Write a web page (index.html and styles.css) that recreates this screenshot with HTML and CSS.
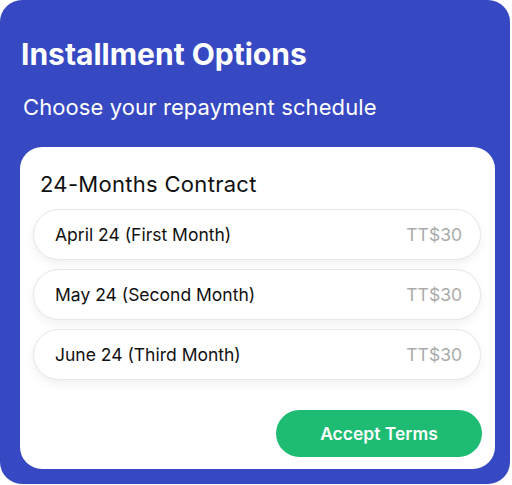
FILE: index.html
```html
<!DOCTYPE html>
<html>
  <head>
    <meta charset="utf-8" />
    <title>Installment Options</title>
    <link rel="stylesheet" href="styles.css">
  </head>
  <body>
    <div class="panel">
      <h1 class="panel-title">Installment Options</h1>
      <p class="panel-subtitle">Choose your repayment schedule</p>

      <div class="contract-card">
        <div class="contract-title">24-Months Contract</div>

        <div class="schedule-list">
          <div class="schedule-row">
            <span class="schedule-month">April 24 (First Month)</span>
            <span class="schedule-amount">TT$30</span>
          </div>
          <div class="schedule-row">
            <span class="schedule-month">May 24 (Second Month)</span>
            <span class="schedule-amount">TT$30</span>
          </div>
          <div class="schedule-row">
            <span class="schedule-month">June 24 (Third Month)</span>
            <span class="schedule-amount">TT$30</span>
          </div>
        </div>

        <div class="card-actions">
          <button class="accept-button">Accept Terms</button>
        </div>
      </div>
    </div>
  </body>
</html>
```

FILE: styles.css
```css
body {
  margin: 0;
  background: #fff;
  font-family: Inter, "Noto Sans", sans-serif;
}

.panel {
  width: 510px;
  height: 484px;
  box-sizing: border-box;
  padding: 37px 15px 0 20px;
  background-color: #3649c2;
  border-radius: 22px;
}

.panel-title {
  margin: 0 0 0 1px;
  font-size: 30px;
  line-height: 34px;
  font-weight: 700;
  color: #fff;
}

.panel-subtitle {
  margin: 23px 0 0 3px;
  font-size: 22px;
  line-height: 26px;
  font-weight: 400;
  letter-spacing: 0.1px;
  color: #fff;
}

.contract-card {
  margin-top: 27px;
  height: 322px;
  box-sizing: border-box;
  padding: 24px 14px 12px 13px;
  background: #fff;
  border-radius: 22px;
  display: flex;
  flex-direction: column;
}

.contract-title {
  padding-left: 7px;
  font-size: 22px;
  line-height: 26px;
  letter-spacing: 0.3px;
  color: #111;
}

.schedule-list {
  margin-top: 12px;
  display: flex;
  flex-direction: column;
  gap: 9px;
}

.schedule-row {
  height: 51px;
  box-sizing: border-box;
  padding: 0 18px 0 21px;
  display: flex;
  align-items: center;
  justify-content: space-between;
  border: 1px solid #e6e6e6;
  border-radius: 26px;
  background: #fff;
  box-shadow: 0 4px 10px rgba(0, 0, 0, 0.06);
}

.schedule-month {
  font-size: 17.5px;
  color: #111;
}

.schedule-amount {
  font-size: 17.5px;
  color: #ababab;
}

.card-actions {
  margin-top: auto;
  display: flex;
  justify-content: flex-end;
}

.accept-button {
  width: 206px;
  height: 47px;
  margin-right: -1px;
  border: none;
  border-radius: 24px;
  background-color: #1dbc72;
  color: #fff;
  font-family: Inter, "Noto Sans", sans-serif;
  font-size: 17.5px;
  font-weight: 600;
  cursor: pointer;
}
```
